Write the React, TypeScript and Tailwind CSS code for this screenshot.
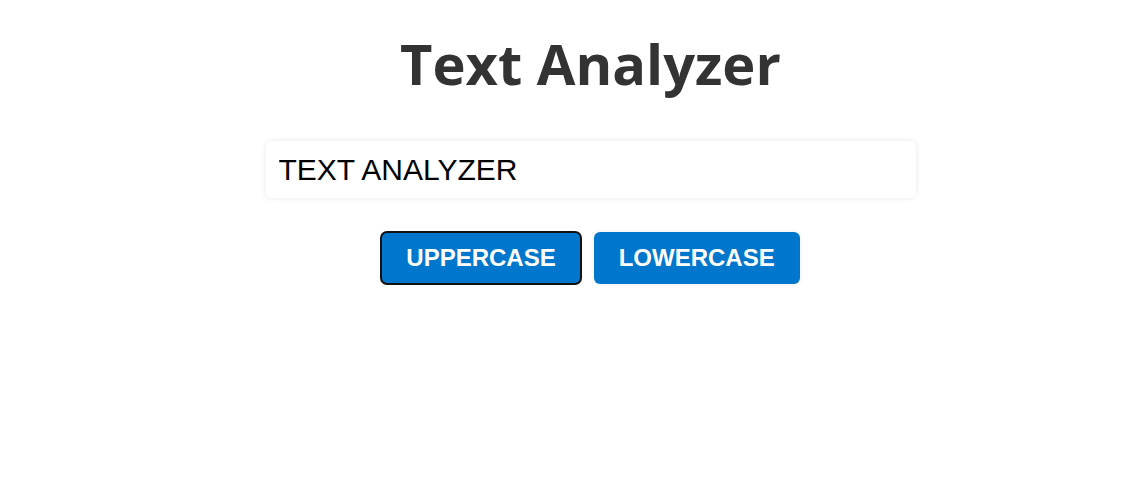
import { useState } from "react";

export default function App() {
  const [text, setText] = useState("TEXT ANALYZER");

  return (
    <div className="min-h-screen bg-white pl-[44px] flex flex-col items-center">
      <h1 className="mt-[21px] text-[56px] font-bold text-[#333333] font-['Open_Sans',sans-serif]">
        Text Analyzer
      </h1>

      <input
        value={text}
        onChange={(e) => setText(e.target.value)}
        className="mt-9 w-[650px] rounded-md bg-white px-[13px] py-3 text-[30px] leading-[33px] text-black shadow-[0_0_6px_rgba(0,0,0,0.09)] outline-none font-['Liberation_Sans',Arial,sans-serif]"
      />

      <div className="mt-[34px] flex gap-[13px]">
        <button
          onClick={() => setText(text.toUpperCase())}
          className="rounded-md bg-[#0077cc] px-[25px] py-3 text-2xl leading-[28px] font-bold text-white outline-2 outline-[#111111] -outline-offset-1 font-['Liberation_Sans',Arial,sans-serif]"
        >
          UPPERCASE
        </button>
        <button
          onClick={() => setText(text.toLowerCase())}
          className="rounded-md bg-[#0077cc] px-[25px] py-3 text-2xl leading-[28px] font-bold text-white shadow-[0_0_4px_rgba(0,0,0,0.08)] font-['Liberation_Sans',Arial,sans-serif]"
        >
          LOWERCASE
        </button>
      </div>
    </div>
  );
}
